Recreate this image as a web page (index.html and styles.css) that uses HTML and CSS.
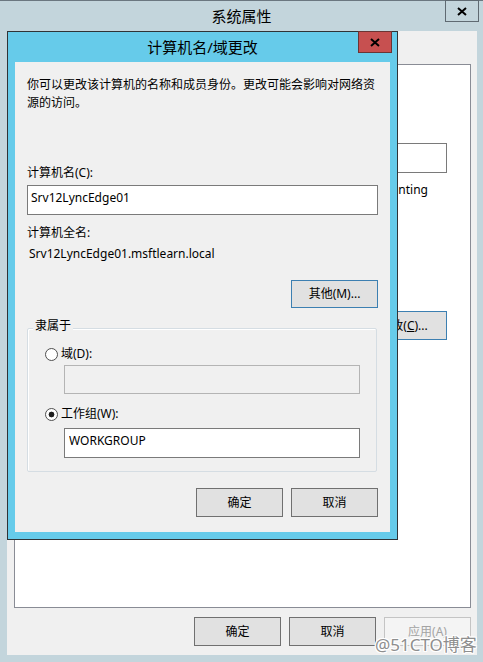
FILE: index.html
```html
<!DOCTYPE html>
<html lang="zh-CN">
<head>
    <meta charset="UTF-8">
    <meta name="viewport" content="width=device-width, initial-scale=1.0">
    <title>系统属性</title>
    <link rel="stylesheet" href="styles.css">
</head>
<body>
    <div class="window">
        <div class="titlebar">
            <span>系统属性</span>
            <button class="close">
                <svg width="10" height="9" viewBox="0 0 10 9"><path d="M1 1L9 8M9 1L1 8" stroke="#000" stroke-width="2"/></svg>
            </button>
        </div>
        <div class="window-body">
            <div class="tab-panel">
                <div class="desc-row">
                    <input class="textbox desc-box" type="text">
                </div>
                <div class="desc-hint">"Accounting</div>
                <div class="change-row">
                    <button class="btn btn-blue btn-change">更改(<u>C</u>)...</button>
                </div>
            </div>
            <div class="actions">
                <button class="btn">确定</button>
                <button class="btn">取消</button>
                <button class="btn" disabled>应用(A)</button>
            </div>
        </div>
    </div>

    <div class="dialog">
        <div class="dialog-title">
            计算机名/域更改
            <button class="close close-red">
                <svg width="10" height="9" viewBox="0 0 10 9"><path d="M1 1L9 8M9 1L1 8" stroke="#000" stroke-width="2"/></svg>
            </button>
        </div>
        <div class="dialog-body">
            <p class="intro">你可以更改该计算机的名称和成员身份。更改可能会影响对网络资<br>源的访问。</p>
            <div class="name-label">计算机名(C):</div>
            <input class="textbox name-box" type="text" value="Srv12LyncEdge01">
            <div class="full-label">计算机全名:</div>
            <div class="full-name">Srv12LyncEdge01.msftlearn.local</div>
            <div class="more-row">
                <button class="btn btn-blue">其他(M)...</button>
            </div>
            <div class="group">
                <div class="group-title">隶属于</div>
                <label class="radio-row"><input type="radio" name="member">域(D):</label>
                <input class="textbox sub-box" type="text" disabled>
                <label class="radio-row second"><input type="radio" name="member" checked>工作组(W):</label>
                <input class="textbox sub-box wg-box" type="text" value="WORKGROUP">
            </div>
            <div class="dialog-actions">
                <button class="btn">确定</button>
                <button class="btn">取消</button>
            </div>
        </div>
    </div>

    <div class="watermark">@51CTO博客</div>
</body>
</html>
```

FILE: styles.css
```css
body {
    margin: 0;
    height: 662px;
    overflow: hidden;
    background-color: #c3d5dc;
    font-family: "Noto Sans", "Noto Sans CJK SC", sans-serif;
    font-size: 12px;
    line-height: 18px;
    color: #000;
}
p {
    margin: 0;
}
.window {
    height: 100%;
    box-sizing: border-box;
    border-top: 1px solid #6b7780;
}
.titlebar {
    position: relative;
    height: 30px;
    line-height: 30px;
    text-align: center;
    font-size: 15px;
}
.close {
    position: absolute;
    top: -1px;
    right: 4px;
    width: 34px;
    height: 22px;
    padding: 0;
    box-sizing: border-box;
    border: 1px solid #5f6a72;
    background-color: transparent;
    display: grid;
    place-items: center;
}
.close svg {
    display: block;
}
.window-body {
    height: 624px;
    box-sizing: border-box;
    margin: 0 6px 0 7px;
    padding: 33px 6px 9px 7px;
    background-color: #f0f0f0;
}
.tab-panel {
    height: 544px;
    box-sizing: border-box;
    border: 1px solid #898c95;
    background-color: #fff;
    padding: 0 23px 0 16px;
    overflow: hidden;
}
.desc-row {
    display: flex;
    justify-content: flex-end;
    height: 28px;
    margin-top: 78px;
}
.desc-box {
    width: 290px;
    height: 28px;
}
.desc-hint {
    height: 18px;
    margin-top: 10px;
    margin-right: 19px;
    text-align: right;
    white-space: nowrap;
}
.change-row {
    display: flex;
    justify-content: flex-end;
    margin-top: 112px;
}
.btn-change {
    height: 30px;
}
.btn {
    width: 87px;
    height: 29px;
    box-sizing: border-box;
    padding: 0;
    border: 1px solid #707070;
    background-color: #e1e1e1;
    font: inherit;
    color: #000;
}
.btn:disabled {
    border-color: #c4c4c4;
    background-color: #f4f4f4;
    color: #a3a3a3;
}
.btn-blue {
    border-color: #3c7fb1;
}
.actions {
    display: flex;
    justify-content: flex-end;
    gap: 8px;
    margin-top: 9px;
}
.dialog {
    position: absolute;
    left: 7px;
    top: 31px;
    width: 391px;
    height: 509px;
    box-sizing: border-box;
    border: 1px solid #2f3336;
    background-color: #66cbea;
    padding: 0 7px 7px;
    display: flex;
    flex-direction: column;
}
.dialog-title {
    position: relative;
    height: 30px;
    line-height: 30px;
    text-align: center;
    font-size: 15px;
}
.close-red {
    right: -2px;
    border-color: #6b3434;
    background-color: #c75050;
}
.dialog-body {
    flex: 1;
    background-color: #f0f0f0;
    padding: 14px 12px 0;
}
.intro {
    height: 36px;
}
.name-label {
    height: 18px;
    margin-top: 52px;
}
.textbox {
    display: block;
    box-sizing: border-box;
    width: 100%;
    height: 30px;
    margin: 0;
    padding: 2px 3px 8px;
    border: 1px solid #7a7a7a;
    background-color: #fff;
    font: inherit;
    line-height: 18px;
    color: #000;
    outline: none;
}
.textbox:disabled {
    border-color: #b4b4b4;
    background-color: #f0f0f0;
}
.name-box {
    margin-top: 3px;
}
.full-label {
    height: 18px;
    margin-top: 9px;
}
.full-name {
    height: 18px;
    margin-top: 3px;
    padding-left: 2px;
}
.more-row {
    display: flex;
    justify-content: flex-end;
    margin-top: 17px;
}
.more-row .btn {
    height: 28px;
}
.group {
    width: 350px;
    box-sizing: border-box;
    margin-top: 20px;
    padding-bottom: 13px;
    border: 1px solid #d5dde3;
    border-radius: 2px;
    box-shadow: inset 1px 1px 0 #fff;
}
.group-title {
    width: fit-content;
    height: 18px;
    margin: -12px 0 0 5px;
    padding: 0 2px;
    background-color: #f0f0f0;
}
.radio-row {
    display: flex;
    align-items: center;
    gap: 3px;
    height: 18px;
    margin-top: 10px;
    padding-left: 17px;
}
.radio-row.second {
    margin-top: 11px;
}
.radio-row input {
    appearance: none;
    width: 13px;
    height: 13px;
    margin: 0;
    border: 1px solid #505050;
    border-radius: 50%;
    background: radial-gradient(circle, #fff 0 5px, #f2f2f2 6px);
}
.radio-row input:checked {
    background: radial-gradient(circle, #1e1e1e 0 2.6px, #fff 3.2px);
}
.sub-box {
    width: 296px;
    height: 29px;
    margin: 2px 0 0 36px;
}
.wg-box {
    height: 30px;
    margin-top: 5px;
    padding-left: 4px;
}
.dialog-actions {
    display: flex;
    justify-content: flex-end;
    gap: 8px;
    margin-top: 16px;
}
.watermark {
    position: absolute;
    left: 375px;
    top: 634px;
    font-size: 17px;
    line-height: 22px;
    color: #8e8e8e;
    text-shadow: 1px 0 #fff, -1px 0 #fff, 0 1px #fff, 0 -1px #fff, 1px 1px #fff, -1px -1px #fff, 1px -1px #fff, -1px 1px #fff;
}
```
